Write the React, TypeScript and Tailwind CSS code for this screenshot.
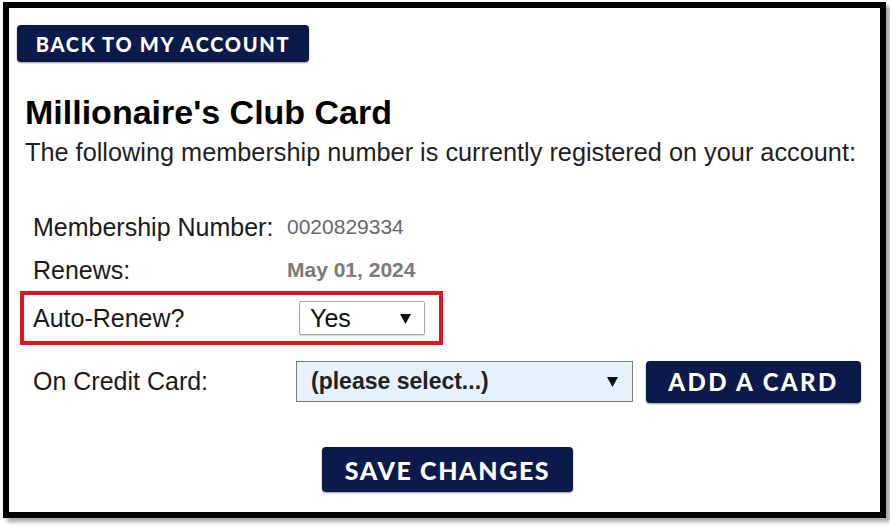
const NAVY = "bg-[#0b1a4a]";

function Caret({ className }: { className?: string }) {
  return (
    <svg width="11" height="11" viewBox="0 0 11 11" className={className}>
      <path d="M0 1 L11 1 L5.5 11 Z" fill="#111" />
    </svg>
  );
}

function NavyButton({ label, className }: { label: string; className: string }) {
  return (
    <button
      className={`${NAVY} ${className} flex items-center justify-center rounded-[4px] text-white font-black font-['Lato','Open_Sans',sans-serif] uppercase shadow-[0_1px_2px_rgba(0,0,0,0.4)]`}
    >
      {label}
    </button>
  );
}

export default function App() {
  return (
    <div className="w-[890px] h-[526px] bg-white pt-[2px] pl-[3px]">
      <div className="w-[883px] h-[516px] border-[6px] border-black bg-white shadow-[4px_4px_4px_rgba(0,0,0,0.35)] font-['Liberation_Sans',Arial,sans-serif] text-[#1a1a1a]">
        <div className="pl-[8px] pt-[17px]">
          <NavyButton
            label="Back to my account"
            className="w-[292px] h-[37px] text-[20px] tracking-[1.7px]"
          />
        </div>

        <h1 className="ml-[16px] mt-[30px] text-[34px] leading-[40px] font-bold text-black">
          Millionaire's Club Card
        </h1>
        <p className="ml-[16px] mt-[6px] text-[25.3px] leading-[28px] text-[#1f1f1f]">
          The following membership number is currently registered on your account:
        </p>

        <div className="mt-[40px] text-[25px] leading-[28px]">
          <div className="h-[42px] pl-[24px] flex items-center">
            <span className="w-[254px]">Membership Number:</span>
            <span className="text-[21px] text-[#66696f]">0020829334</span>
          </div>
          <div className="h-[43px] pl-[24px] flex items-center">
            <span className="w-[254px]">Renews:</span>
            <span className="text-[21px] font-bold text-[#7a7a7a]">May 01, 2024</span>
          </div>

          <div className="ml-[11px] w-[423px] h-[54px] border-4 border-[#e0161f] pl-[9px] flex items-center">
            <span className="w-[266px]">Auto-Renew?</span>
            <div className="w-[126px] h-[34px] border border-[#a8a8a8] rounded-[2px] bg-white shadow-[0_1px_1px_rgba(0,0,0,0.15)] flex items-center justify-between pl-[10px] pr-[13px]">
              <span className="text-[#111]">Yes</span>
              <Caret />
            </div>
          </div>

          <div className="mt-[14px] h-[44px] pl-[24px] flex items-center">
            <span className="w-[263px]">On Credit Card:</span>
            <div className="w-[337px] h-[41px] border border-[#7a7a7a] bg-[#e6f2fb] flex items-center justify-between pl-[14px] pr-[14px]">
              <span className="text-[23px] font-bold text-[#222]">(please select...)</span>
              <Caret />
            </div>
            <NavyButton
              label="Add a card"
              className="ml-[13px] mt-[2px] w-[215px] h-[42px] text-[24px] tracking-[2.4px]"
            />
          </div>

          <div className="mt-[44px] flex justify-center pl-[6px]">
            <NavyButton
              label="Save changes"
              className="w-[251px] h-[45px] text-[25px] tracking-[1.6px]"
            />
          </div>
        </div>
      </div>
    </div>
  );
}
